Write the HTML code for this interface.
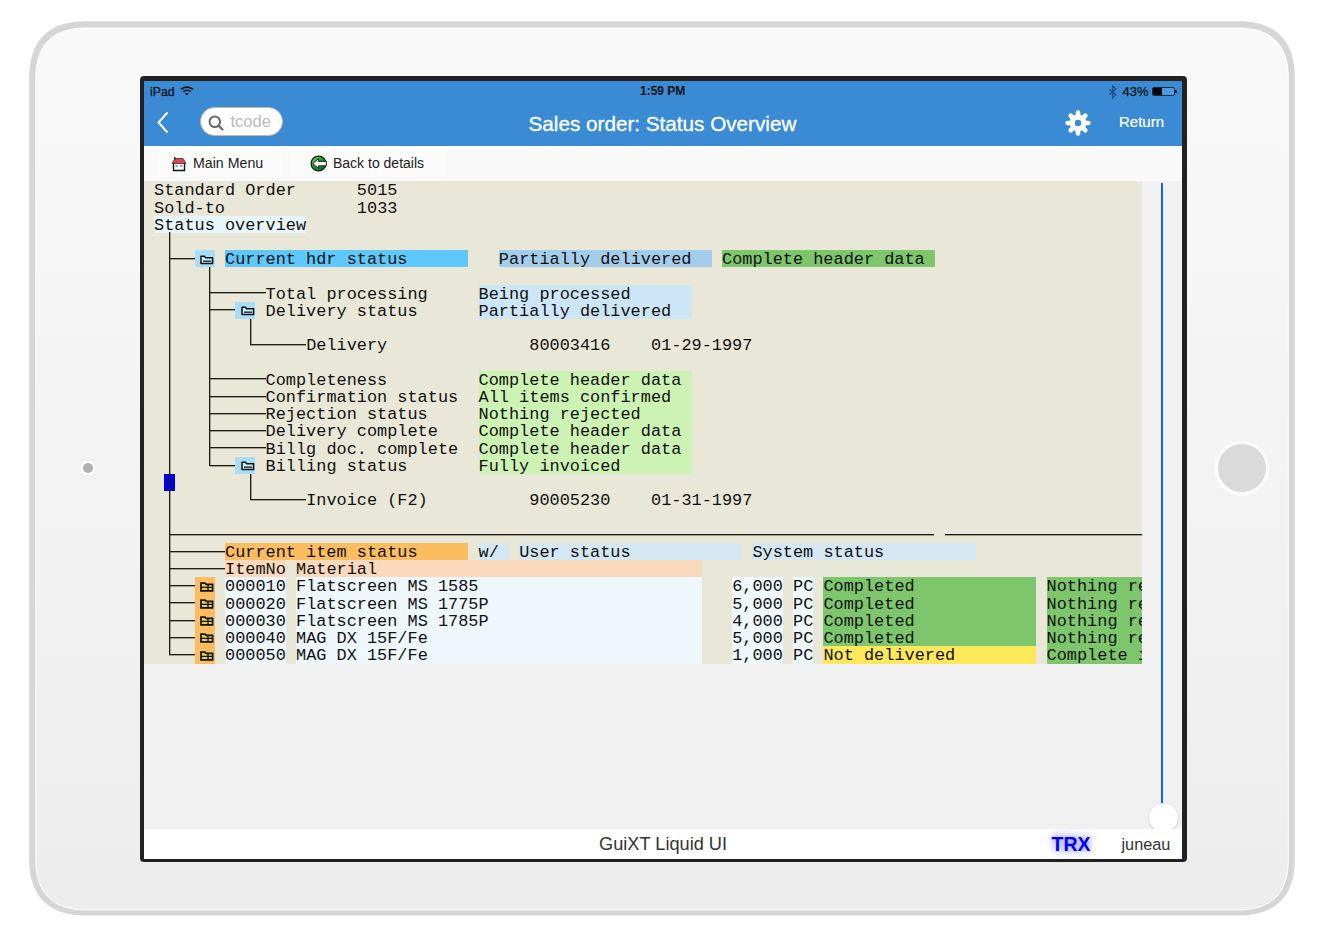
<!DOCTYPE html>
<html><head><meta charset="utf-8"><style>
html,body{margin:0;padding:0;}
body{width:1329px;height:946px;overflow:hidden;background:#fff;position:relative;font-family:"Liberation Sans",sans-serif;}
.a{position:absolute;}
#ipad{position:absolute;left:29px;top:21px;width:1266px;height:895px;box-sizing:border-box;border:6.5px solid #d6d6d6;border-radius:56px;background:linear-gradient(#f9f9f9,#ededed);box-shadow:inset 0 0 0 1px rgba(255,255,255,0.9);}
#screen{position:absolute;left:140px;top:76px;width:1047px;height:786px;background:#222;border-radius:4px;}
#nav{position:absolute;left:144px;top:80.5px;width:1038px;height:65px;background:#3a8bd3;}
#tool{position:absolute;left:144px;top:145.5px;width:1038px;height:35.5px;background:linear-gradient(#fff 0px,#fff 4px,#f9f9f9 5px,#f9f9f9 34px,#fdfdfd 35px);}
#gray{position:absolute;left:144px;top:181px;width:1038px;height:648px;background:#f1f1f1;}
#beige{position:absolute;left:144px;top:181px;width:998px;height:482.60px;background:#e9e7d7;}
#clip{position:absolute;left:144px;top:181px;width:998px;height:482.60px;overflow:hidden;}
#clipin{position:absolute;left:-144px;top:-181px;width:1329px;height:946px;}
.bx{position:absolute;}
.t{position:absolute;font-family:"Liberation Mono",monospace;font-size:16.905px;line-height:17.225px;height:17.225px;white-space:pre;color:#111;-webkit-text-stroke:0px #111;}
.ln{position:absolute;background:#1e1b16;}
.hl{box-shadow:0 1px 0 rgba(30,27,22,0.35);}
.vl{box-shadow:1px 0 0 rgba(30,27,22,0.35);}
.ic{position:absolute;}
#footer{position:absolute;left:144px;top:828.5px;width:1038px;height:30.5px;background:#fff;}
.sb{position:absolute;color:#111;font-size:12px;white-space:nowrap;}
</style></head><body>
<svg class="a" style="left:0;top:0" width="1329" height="946"><defs><linearGradient id="ipg" x1="0" y1="0" x2="0" y2="1"><stop offset="0" stop-color="#f9f9f9"/><stop offset="1" stop-color="#ededed"/></linearGradient></defs><path d="M85.20 21.20 H1238.80 C1275.48 21.20 1294.80 40.52 1294.80 77.20 V859.50 C1294.80 896.18 1275.48 915.50 1238.80 915.50 H85.20 C48.52 915.50 29.20 896.18 29.20 859.50 V77.20 C29.20 40.52 48.52 21.20 85.20 21.20 Z" fill="#d6d6d6"/><path d="M85.30 28.00 H1238.80 C1271.22 28.00 1288.30 45.08 1288.30 77.50 V860.40 C1288.30 892.82 1271.22 909.90 1238.80 909.90 H85.30 C52.88 909.90 35.80 892.82 35.80 860.40 V77.50 C35.80 45.08 52.88 28.00 85.30 28.00 Z" fill="url(#ipg)" stroke="rgba(255,255,255,0.95)" stroke-width="1"/></svg>
<div class="a" style="left:81px;top:461px;width:14px;height:14px;border-radius:50%;background:#fff;"></div>
<div class="a" style="left:83px;top:463px;width:10px;height:10px;border-radius:50%;background:#b2afaf;"></div>
<div class="a" style="left:1214px;top:440.5px;width:55px;height:55px;border-radius:50%;background:#fbfbfb;"></div>
<div class="a" style="left:1217.5px;top:444px;width:48px;height:48px;border-radius:50%;background:#dadada;"></div>
<div id="screen"></div>
<div id="nav"></div>
<div class="sb" style="left:150px;top:85px;font-size:12.3px;-webkit-text-stroke:0.25px #111;">iPad</div>
<svg class="a" style="left:180px;top:86px" width="14" height="10" viewBox="0 0 14 10"><path d="M1 3.6 A8.5 8.5 0 0 1 13 3.6" fill="none" stroke="#111" stroke-width="1.6"/><path d="M3.3 5.8 A5.3 5.3 0 0 1 10.7 5.8" fill="none" stroke="#111" stroke-width="1.6"/><path d="M6.8 9.6 L4.9 7.2 Q6.8 6.4 8.7 7.2 Z" fill="#111"/></svg>
<div class="sb" style="left:640px;top:84px;font-weight:bold;">1:59 PM</div>
<svg class="a" style="left:1107.5px;top:84.5px" width="10" height="14" viewBox="0 0 10 14"><path d="M1.5 4.2 L7.8 9.8 L4.8 12.8 V1 L7.8 4 L1.5 9.6" fill="none" stroke="#1b4a78" stroke-width="1.2"/></svg>
<div class="sb" style="left:1122.5px;top:83.5px;font-size:13px;-webkit-text-stroke:0.25px #111;">43%</div>
<div class="a" style="left:1152px;top:86.5px;width:23px;height:9.5px;box-sizing:border-box;border:1px solid #1a2a3a;border-radius:2px;background:#4d9ae0;"></div>
<div class="a" style="left:1153px;top:87.5px;width:9px;height:7.5px;background:#050505;"></div>
<div class="a" style="left:1175px;top:89.5px;width:2.2px;height:3.5px;background:#111;border-radius:0 1.5px 1.5px 0;"></div>
<svg class="a" style="left:156px;top:111px" width="14" height="23" viewBox="0 0 14 23"><path d="M11.5 1.5 L2.5 11.5 L11.5 21.5" fill="none" stroke="#fff" stroke-width="2"/></svg>
<div class="a" style="left:200px;top:106.5px;width:83px;height:29px;box-sizing:border-box;border-radius:15px;background:#fff;border:1px solid #c9b49c;"></div>
<svg class="a" style="left:207px;top:113.5px" width="18" height="18" viewBox="0 0 18 18"><circle cx="7.8" cy="7.8" r="5.3" fill="none" stroke="#6a6a6a" stroke-width="2"/><path d="M11.6 11.6 L15.5 15.5" stroke="#6a6a6a" stroke-width="2.2" stroke-linecap="round"/></svg>
<div class="a" style="left:230.5px;top:111.8px;font-size:16.5px;color:#b9b9b9;white-space:nowrap;">tcode</div>
<div class="a" id="title" style="left:528.5px;top:112.0px;font-size:20.7px;color:#fff;-webkit-text-stroke:0.3px #fff;white-space:nowrap;">Sales order: Status Overview</div>
<svg class="a" style="left:1063.5px;top:108.7px" width="28" height="28" viewBox="-14 -14 28 28"><g fill="#fff"><circle r="8.4"/><rect x="-2.3" y="-12.7" width="4.6" height="7" rx="2.3" transform="rotate(0)"/><rect x="-2.3" y="-12.7" width="4.6" height="7" rx="2.3" transform="rotate(45)"/><rect x="-2.3" y="-12.7" width="4.6" height="7" rx="2.3" transform="rotate(90)"/><rect x="-2.3" y="-12.7" width="4.6" height="7" rx="2.3" transform="rotate(135)"/><rect x="-2.3" y="-12.7" width="4.6" height="7" rx="2.3" transform="rotate(180)"/><rect x="-2.3" y="-12.7" width="4.6" height="7" rx="2.3" transform="rotate(225)"/><rect x="-2.3" y="-12.7" width="4.6" height="7" rx="2.3" transform="rotate(270)"/><rect x="-2.3" y="-12.7" width="4.6" height="7" rx="2.3" transform="rotate(315)"/></g><circle r="3.2" fill="#3a8bd3"/></svg>
<div class="a" style="left:1119px;top:113px;font-size:15px;color:#fff;-webkit-text-stroke:0.2px #fff;white-space:nowrap;">Return</div>
<div id="tool"></div>
<div class="a" style="left:157px;top:150px;width:126px;height:27px;background:#fbfbfb;"></div>
<div class="a" style="left:291px;top:150px;width:155px;height:27px;background:#fbfbfb;"></div>
<svg class="a" style="left:171px;top:156px" width="16" height="16" viewBox="0 0 16 16"><path d="M2.5 7 V14.5 H13.5 V7" fill="#fff" stroke="#111" stroke-width="1.4"/><path d="M1 7.5 L4 2.5 H12 L15 7.5 Z" fill="#e4434f" stroke="#333" stroke-width="0.8"/><path d="M4.5 10 H7 M9 10 H11.5" stroke="#888" stroke-width="1.6"/><rect x="3" y="1" width="1.5" height="3" fill="#333"/></svg>
<div class="a" style="left:193px;top:155.2px;font-size:14.2px;color:#222;white-space:nowrap;">Main Menu</div>
<svg class="a" style="left:310px;top:155px" width="18" height="17" viewBox="0 0 18 17"><defs><linearGradient id="gg" x1="0" y1="0" x2="1" y2="1"><stop offset="0" stop-color="#7fdc5a"/><stop offset="0.5" stop-color="#1f9a2e"/><stop offset="1" stop-color="#0b5a1a"/></linearGradient></defs><circle cx="8.5" cy="8.5" r="7.4" fill="url(#gg)" stroke="#082a0e" stroke-width="1.3"/><path d="M2.8 8.6 L8.6 3.6 V6.4 H16.4 V10.8 H8.6 V13.6 Z" fill="#fff" stroke="#111" stroke-width="0.9" stroke-linejoin="round"/></svg>
<div class="a" style="left:333px;top:155.2px;font-size:14px;color:#222;white-space:nowrap;">Back to details</div>
<div id="gray"></div>
<div id="beige"></div>
<div id="clip"><div id="clipin">
<div class="bx" style="left:154.00px;top:215.75px;width:152.15px;height:17.23px;background:#e8f5fb"></div>
<div class="bx" style="left:194.57px;top:250.20px;width:20.29px;height:17.23px;background:#a9dcf6"></div>
<div class="bx" style="left:225.00px;top:250.20px;width:243.43px;height:17.23px;background:#5cc8fb"></div>
<div class="bx" style="left:498.86px;top:250.20px;width:213.00px;height:17.23px;background:#a4cdec"></div>
<div class="bx" style="left:722.01px;top:250.20px;width:213.00px;height:17.23px;background:#7dc66c"></div>
<div class="bx" style="left:478.58px;top:284.65px;width:213.00px;height:34.45px;background:#cce6f7"></div>
<div class="bx" style="left:235.14px;top:301.88px;width:20.29px;height:17.23px;background:#a9dcf6"></div>
<div class="bx" style="left:478.58px;top:370.78px;width:213.00px;height:103.35px;background:#cdf3b4"></div>
<div class="bx" style="left:235.14px;top:456.90px;width:20.29px;height:17.23px;background:#a9dcf6"></div>
<div class="bx" style="left:225.00px;top:543.03px;width:243.43px;height:17.23px;background:#fbbd5f"></div>
<div class="bx" style="left:478.58px;top:543.03px;width:30.43px;height:17.23px;background:#d4e8f4"></div>
<div class="bx" style="left:519.15px;top:543.03px;width:223.15px;height:17.23px;background:#d4e8f4"></div>
<div class="bx" style="left:752.44px;top:543.03px;width:223.15px;height:17.23px;background:#d4e8f4"></div>
<div class="bx" style="left:225.00px;top:560.25px;width:60.86px;height:17.23px;background:#fbd9bd"></div>
<div class="bx" style="left:296.00px;top:560.25px;width:405.72px;height:17.23px;background:#fbd9bd"></div>
<div class="bx" style="left:194.57px;top:577.48px;width:20.29px;height:86.12px;background:#fbbd5f"></div>
<div class="bx" style="left:225.00px;top:577.48px;width:60.86px;height:86.12px;background:#edf7fc"></div>
<div class="bx" style="left:296.00px;top:577.48px;width:405.72px;height:86.12px;background:#edf7fc"></div>
<div class="bx" style="left:732.15px;top:577.48px;width:50.72px;height:86.12px;background:#edf7fc"></div>
<div class="bx" style="left:793.01px;top:577.48px;width:20.29px;height:86.12px;background:#edf7fc"></div>
<div class="bx" style="left:823.44px;top:577.48px;width:213.00px;height:68.90px;background:#7dc66c"></div>
<div class="bx" style="left:823.44px;top:646.38px;width:213.00px;height:17.23px;background:#fce85a"></div>
<div class="bx" style="left:1046.58px;top:577.48px;width:101.43px;height:86.12px;background:#7dc66c"></div>
<div class="bx" style="left:164.2px;top:473.93px;width:10.5px;height:17.2px;background:#0000e6"></div>
<div class="ln vl" style="left:169px;top:232px;width:1px;height:423px"></div>
<div class="ln hl" style="left:169px;top:258px;width:26px;height:1px"></div>
<div class="ln vl" style="left:209px;top:267px;width:1px;height:199px"></div>
<div class="ln hl" style="left:210px;top:292px;width:56px;height:1px"></div>
<div class="ln hl" style="left:210px;top:309px;width:25px;height:1px"></div>
<div class="ln vl" style="left:250px;top:319px;width:1px;height:26px"></div>
<div class="ln hl" style="left:250px;top:344px;width:56px;height:1px"></div>
<div class="ln hl" style="left:210px;top:378px;width:56px;height:1px"></div>
<div class="ln hl" style="left:210px;top:396px;width:56px;height:1px"></div>
<div class="ln hl" style="left:210px;top:413px;width:56px;height:1px"></div>
<div class="ln hl" style="left:210px;top:430px;width:56px;height:1px"></div>
<div class="ln hl" style="left:210px;top:447px;width:56px;height:1px"></div>
<div class="ln hl" style="left:210px;top:465px;width:25px;height:1px"></div>
<div class="ln vl" style="left:250px;top:474px;width:1px;height:26px"></div>
<div class="ln hl" style="left:250px;top:499px;width:56px;height:1px"></div>
<div class="ln hl" style="left:169px;top:534px;width:765px;height:1px"></div>
<div class="ln hl" style="left:945px;top:534px;width:197px;height:1px"></div>
<div class="ln hl" style="left:169px;top:551px;width:56px;height:1px"></div>
<div class="ln hl" style="left:169px;top:568px;width:56px;height:1px"></div>
<div class="ln hl" style="left:169px;top:585px;width:26px;height:1px"></div>
<div class="ln hl" style="left:169px;top:602px;width:26px;height:1px"></div>
<div class="ln hl" style="left:169px;top:620px;width:26px;height:1px"></div>
<div class="ln hl" style="left:169px;top:637px;width:26px;height:1px"></div>
<div class="ln hl" style="left:169px;top:654px;width:26px;height:1px"></div>
<svg class="ic" style="left:199.97px;top:254.50px" width="14" height="10" viewBox="0 0 14 10"><path d="M1 1.2 H4.4 L5.4 2.7 H12.6 V8.6 H1 Z" fill="#c8f0fc" stroke="#111" stroke-width="1.5" stroke-linejoin="round"/><path d="M3 6.2 H11.2" stroke="#1a2a30" stroke-width="1.4"/></svg>
<svg class="ic" style="left:240.54px;top:306.18px" width="14" height="10" viewBox="0 0 14 10"><path d="M1 1.2 H4.4 L5.4 2.7 H12.6 V8.6 H1 Z" fill="#c8f0fc" stroke="#111" stroke-width="1.5" stroke-linejoin="round"/><path d="M3 6.2 H11.2" stroke="#1a2a30" stroke-width="1.4"/></svg>
<svg class="ic" style="left:240.54px;top:461.20px" width="14" height="10" viewBox="0 0 14 10"><path d="M1 1.2 H4.4 L5.4 2.7 H12.6 V8.6 H1 Z" fill="#c8f0fc" stroke="#111" stroke-width="1.5" stroke-linejoin="round"/><path d="M3 6.2 H11.2" stroke="#1a2a30" stroke-width="1.4"/></svg>
<svg class="ic" style="left:199.97px;top:581.77px" width="14" height="10" viewBox="0 0 14 10"><path d="M1 1.2 H5 L6.2 2.4 H12.6 V8.8 H1 Z" fill="#e8d040" stroke="#111" stroke-width="1.7"/><path d="M1.5 5.4 H12.5 M8 2.5 V8.5" stroke="#111" stroke-width="1.3"/></svg>
<svg class="ic" style="left:199.97px;top:599.00px" width="14" height="10" viewBox="0 0 14 10"><path d="M1 1.2 H5 L6.2 2.4 H12.6 V8.8 H1 Z" fill="#e8d040" stroke="#111" stroke-width="1.7"/><path d="M1.5 5.4 H12.5 M8 2.5 V8.5" stroke="#111" stroke-width="1.3"/></svg>
<svg class="ic" style="left:199.97px;top:616.23px" width="14" height="10" viewBox="0 0 14 10"><path d="M1 1.2 H5 L6.2 2.4 H12.6 V8.8 H1 Z" fill="#e8d040" stroke="#111" stroke-width="1.7"/><path d="M1.5 5.4 H12.5 M8 2.5 V8.5" stroke="#111" stroke-width="1.3"/></svg>
<svg class="ic" style="left:199.97px;top:633.45px" width="14" height="10" viewBox="0 0 14 10"><path d="M1 1.2 H5 L6.2 2.4 H12.6 V8.8 H1 Z" fill="#e8d040" stroke="#111" stroke-width="1.7"/><path d="M1.5 5.4 H12.5 M8 2.5 V8.5" stroke="#111" stroke-width="1.3"/></svg>
<svg class="ic" style="left:199.97px;top:650.67px" width="14" height="10" viewBox="0 0 14 10"><path d="M1 1.2 H5 L6.2 2.4 H12.6 V8.8 H1 Z" fill="#e8d040" stroke="#111" stroke-width="1.7"/><path d="M1.5 5.4 H12.5 M8 2.5 V8.5" stroke="#111" stroke-width="1.3"/></svg>
<div class="t" style="left:154.00px;top:182.30px">Standard Order</div>
<div class="t" style="left:356.86px;top:182.30px">5015</div>
<div class="t" style="left:154.00px;top:199.53px">Sold-to</div>
<div class="t" style="left:356.86px;top:199.53px">1033</div>
<div class="t" style="left:154.00px;top:216.75px">Status overview</div>
<div class="t" style="left:225.00px;top:251.20px">Current hdr status</div>
<div class="t" style="left:498.86px;top:251.20px">Partially delivered</div>
<div class="t" style="left:722.01px;top:251.20px">Complete header data</div>
<div class="t" style="left:265.57px;top:285.65px">Total processing</div>
<div class="t" style="left:478.58px;top:285.65px">Being processed</div>
<div class="t" style="left:265.57px;top:302.88px">Delivery status</div>
<div class="t" style="left:478.58px;top:302.88px">Partially delivered</div>
<div class="t" style="left:306.14px;top:337.33px">Delivery</div>
<div class="t" style="left:529.29px;top:337.33px">80003416</div>
<div class="t" style="left:651.01px;top:337.33px">01-29-1997</div>
<div class="t" style="left:265.57px;top:371.78px">Completeness</div>
<div class="t" style="left:478.58px;top:371.78px">Complete header data</div>
<div class="t" style="left:265.57px;top:389.00px">Confirmation status</div>
<div class="t" style="left:478.58px;top:389.00px">All items confirmed</div>
<div class="t" style="left:265.57px;top:406.23px">Rejection status</div>
<div class="t" style="left:478.58px;top:406.23px">Nothing rejected</div>
<div class="t" style="left:265.57px;top:423.45px">Delivery complete</div>
<div class="t" style="left:478.58px;top:423.45px">Complete header data</div>
<div class="t" style="left:265.57px;top:440.68px">Billg doc. complete</div>
<div class="t" style="left:478.58px;top:440.68px">Complete header data</div>
<div class="t" style="left:265.57px;top:457.90px">Billing status</div>
<div class="t" style="left:478.58px;top:457.90px">Fully invoiced</div>
<div class="t" style="left:306.14px;top:492.35px">Invoice (F2)</div>
<div class="t" style="left:529.29px;top:492.35px">90005230</div>
<div class="t" style="left:651.01px;top:492.35px">01-31-1997</div>
<div class="t" style="left:225.00px;top:544.03px">Current item status</div>
<div class="t" style="left:478.58px;top:544.03px">w/</div>
<div class="t" style="left:519.15px;top:544.03px">User status</div>
<div class="t" style="left:752.44px;top:544.03px">System status</div>
<div class="t" style="left:225.00px;top:561.25px">ItemNo</div>
<div class="t" style="left:296.00px;top:561.25px">Material</div>
<div class="t" style="left:225.00px;top:578.48px">000010</div>
<div class="t" style="left:296.00px;top:578.48px">Flatscreen MS 1585</div>
<div class="t" style="left:732.15px;top:578.48px">6,000</div>
<div class="t" style="left:793.01px;top:578.48px">PC</div>
<div class="t" style="left:823.44px;top:578.48px">Completed</div>
<div class="t" style="left:1046.58px;top:578.48px">Nothing re</div>
<div class="t" style="left:225.00px;top:595.70px">000020</div>
<div class="t" style="left:296.00px;top:595.70px">Flatscreen MS 1775P</div>
<div class="t" style="left:732.15px;top:595.70px">5,000</div>
<div class="t" style="left:793.01px;top:595.70px">PC</div>
<div class="t" style="left:823.44px;top:595.70px">Completed</div>
<div class="t" style="left:1046.58px;top:595.70px">Nothing re</div>
<div class="t" style="left:225.00px;top:612.93px">000030</div>
<div class="t" style="left:296.00px;top:612.93px">Flatscreen MS 1785P</div>
<div class="t" style="left:732.15px;top:612.93px">4,000</div>
<div class="t" style="left:793.01px;top:612.93px">PC</div>
<div class="t" style="left:823.44px;top:612.93px">Completed</div>
<div class="t" style="left:1046.58px;top:612.93px">Nothing re</div>
<div class="t" style="left:225.00px;top:630.15px">000040</div>
<div class="t" style="left:296.00px;top:630.15px">MAG DX 15F/Fe</div>
<div class="t" style="left:732.15px;top:630.15px">5,000</div>
<div class="t" style="left:793.01px;top:630.15px">PC</div>
<div class="t" style="left:823.44px;top:630.15px">Completed</div>
<div class="t" style="left:1046.58px;top:630.15px">Nothing re</div>
<div class="t" style="left:225.00px;top:647.38px">000050</div>
<div class="t" style="left:296.00px;top:647.38px">MAG DX 15F/Fe</div>
<div class="t" style="left:732.15px;top:647.38px">1,000</div>
<div class="t" style="left:793.01px;top:647.38px">PC</div>
<div class="t" style="left:823.44px;top:647.38px">Not delivered</div>
<div class="t" style="left:1046.58px;top:647.38px">Complete i</div>
</div></div>
<div class="a" style="left:1161px;top:183px;width:2px;height:622px;background:#0a66f5;"></div>
<div class="a" style="left:1148.5px;top:802.8px;width:29px;height:29px;border-radius:50%;background:#fff;box-shadow:0 0.5px 2px rgba(0,0,0,0.25);"></div>
<div id="footer"></div>
<div class="a" style="left:599px;top:833.5px;font-size:18.2px;color:#333;white-space:nowrap;">GuiXT Liquid UI</div>
<div class="a" style="left:1051.5px;top:833.2px;font-size:19.5px;font-weight:bold;color:#0000f0;white-space:nowrap;text-shadow:0 0 6px rgba(100,100,255,0.75),0 0 12px rgba(150,150,255,0.6);">TRX</div>
<div class="a" style="left:1121.5px;top:835px;font-size:16.3px;color:#333;white-space:nowrap;">juneau</div>
</body></html>
